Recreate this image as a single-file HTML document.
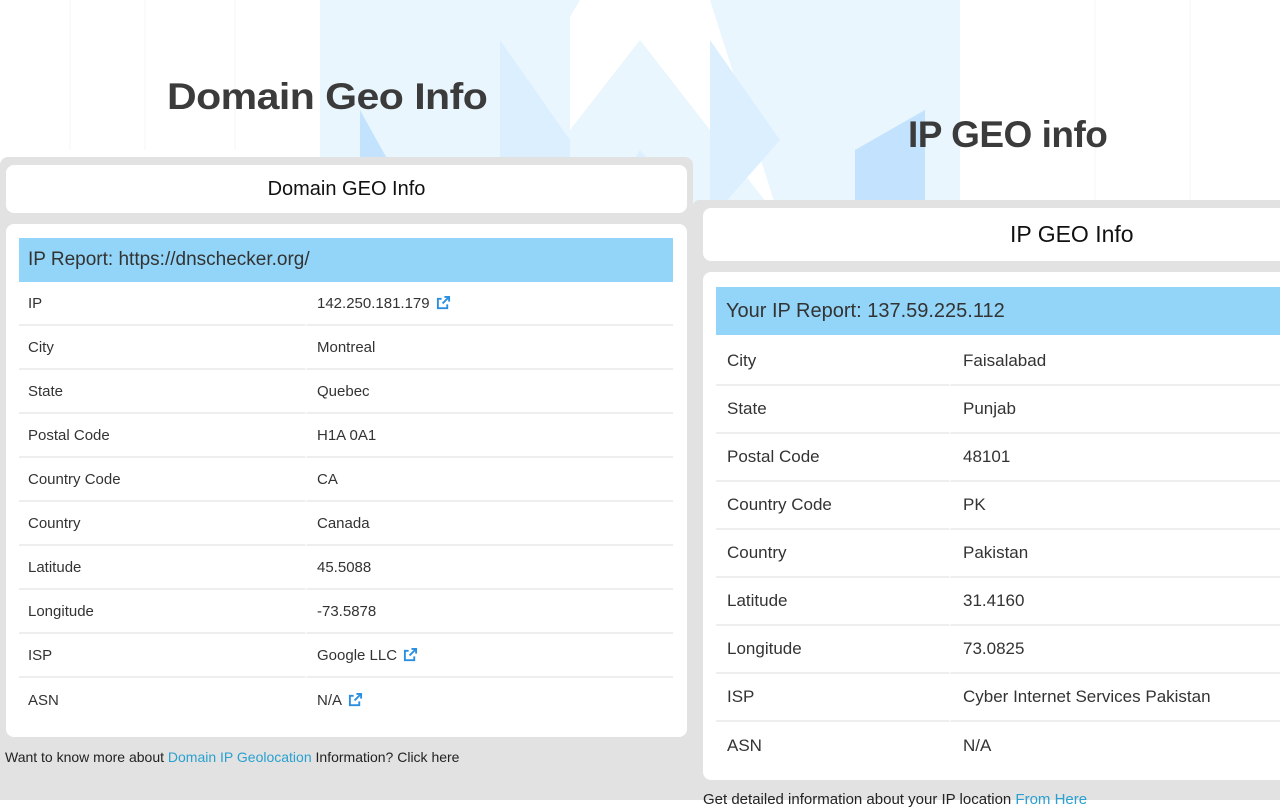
<!DOCTYPE html>
<html><head><style>
*{margin:0;padding:0;box-sizing:border-box}
body{width:1280px;height:800px;overflow:hidden;background:#fff;position:relative;font-family:"Liberation Sans",sans-serif;color:#333}
.bg{position:absolute;left:0;top:0;width:1280px;height:220px}
.t{position:absolute;font-weight:bold;color:#3b3b3b;font-size:37px;letter-spacing:-0.5px;transform-origin:left top}
.panel{position:absolute;background:#e2e2e2;border-radius:8px 8px 0 0}
.card{position:absolute;background:#fff;border-radius:8px}
.hd{display:flex;align-items:center;justify-content:center;color:#111}
table{border-collapse:separate;border-spacing:0;position:absolute}
td{border-bottom:2px solid #eee;vertical-align:middle}
td+td{border-left:2px solid #fff}
.bar{position:absolute;background:#93d5f8;color:#333;display:flex;align-items:center}
.ic{display:inline-block;vertical-align:-2px;margin-left:6px}
a{color:#2aa0d0;text-decoration:none}
</style></head><body>
<svg class="bg" viewBox="0 0 1280 220">
<g fill="#eaf6fe">
<polygon points="320,0 580,0 450,220 320,220"/>
<polygon points="430,0 570,0 570,220 430,220"/>
<polygon points="640,40 780,220 500,220"/>
<polygon points="710,0 960,0 960,220 780,220"/>
</g>
<g fill="#dcefff">
<polygon points="500,40 570,140 570,220 500,220"/>
<polygon points="640,150 700,220 600,220"/>
<polygon points="710,40 780,140 710,220"/>
</g>
<g fill="#c2e2fd">
<polygon points="360,110 410,200 360,220"/>
<polygon points="855,150 925,110 925,200 855,200"/>
</g>
<g stroke="#f3f6f9" stroke-width="1">
<line x1="70" y1="0" x2="70" y2="150"/><line x1="145" y1="0" x2="145" y2="150"/><line x1="235" y1="0" x2="235" y2="150"/>
<line x1="1095" y1="0" x2="1095" y2="200"/><line x1="1190" y1="0" x2="1190" y2="200"/>
</g>
</svg>
<div class="t" style="left:167px;top:76px;transform:scaleX(1.11)">Domain Geo Info</div>
<div class="t" style="left:908px;top:114px">IP GEO info</div>

<div class="panel" style="left:0;top:157px;width:693px;height:643px"></div>
<div class="card hd" style="left:6px;top:165px;width:681px;height:48px;font-size:20px">Domain GEO Info</div>
<div class="card" style="left:6px;top:224px;width:681px;height:513px"></div>
<div class="bar" style="left:19px;top:238px;width:654px;height:44px;font-size:19px;padding-left:9px">IP Report: https://dnschecker.org/</div>
<table style="left:19px;top:282px;width:654px;font-size:15px">
<colgroup><col style="width:286px"><col></colgroup>
<tr style="height:44px"><td style="padding-left:9px">IP</td><td style="padding-left:10px">142.250.181.179<svg class="ic" width="15" height="15" viewBox="0 0 16 16"><path d="M9 2h5v5M14 2L7 9M12 10v4H2V4h4" fill="none" stroke="#2a8fe0" stroke-width="2"/></svg></td></tr>
<tr style="height:44px"><td style="padding-left:9px">City</td><td style="padding-left:10px">Montreal</td></tr>
<tr style="height:44px"><td style="padding-left:9px">State</td><td style="padding-left:10px">Quebec</td></tr>
<tr style="height:44px"><td style="padding-left:9px">Postal Code</td><td style="padding-left:10px">H1A 0A1</td></tr>
<tr style="height:44px"><td style="padding-left:9px">Country Code</td><td style="padding-left:10px">CA</td></tr>
<tr style="height:44px"><td style="padding-left:9px">Country</td><td style="padding-left:10px">Canada</td></tr>
<tr style="height:44px"><td style="padding-left:9px">Latitude</td><td style="padding-left:10px">45.5088</td></tr>
<tr style="height:44px"><td style="padding-left:9px">Longitude</td><td style="padding-left:10px">-73.5878</td></tr>
<tr style="height:44px"><td style="padding-left:9px">ISP</td><td style="padding-left:10px">Google LLC<svg class="ic" width="15" height="15" viewBox="0 0 16 16"><path d="M9 2h5v5M14 2L7 9M12 10v4H2V4h4" fill="none" stroke="#2a8fe0" stroke-width="2"/></svg></td></tr>
<tr style="height:44px"><td style="padding-left:9px;border:none">ASN</td><td style="padding-left:10px;border-bottom:none">N/A<svg class="ic" width="15" height="15" viewBox="0 0 16 16"><path d="M9 2h5v5M14 2L7 9M12 10v4H2V4h4" fill="none" stroke="#2a8fe0" stroke-width="2"/></svg></td></tr>
</table>
<div style="position:absolute;left:5px;top:749px;font-size:14px;color:#222">Want to know more about <a>Domain IP Geolocation</a> Information? Click here</div>

<div class="panel" style="left:693px;top:200px;width:587px;height:600px;border-radius:6px 0 0 0"></div>
<div class="card hd" style="left:703px;top:208px;width:590px;height:53px;font-size:23px;padding-left:146px;justify-content:flex-start;padding-left:307px;border-radius:8px 0 0 8px">IP GEO Info</div>
<div class="card" style="left:703px;top:272px;width:590px;height:508px;border-radius:8px 0 0 8px"></div>
<div class="bar" style="left:716px;top:287px;width:564px;height:48px;font-size:20px;padding-left:10px">Your IP Report: 137.59.225.112</div>
<table style="left:716px;top:338px;width:564px;font-size:17px">
<colgroup><col style="width:233px"><col></colgroup>
<tr style="height:48px"><td style="padding-left:11px">City</td><td style="padding-left:12px">Faisalabad</td></tr>
<tr style="height:48px"><td style="padding-left:11px">State</td><td style="padding-left:12px">Punjab</td></tr>
<tr style="height:48px"><td style="padding-left:11px">Postal Code</td><td style="padding-left:12px">48101</td></tr>
<tr style="height:48px"><td style="padding-left:11px">Country Code</td><td style="padding-left:12px">PK</td></tr>
<tr style="height:48px"><td style="padding-left:11px">Country</td><td style="padding-left:12px">Pakistan</td></tr>
<tr style="height:48px"><td style="padding-left:11px">Latitude</td><td style="padding-left:12px">31.4160</td></tr>
<tr style="height:48px"><td style="padding-left:11px">Longitude</td><td style="padding-left:12px">73.0825</td></tr>
<tr style="height:48px"><td style="padding-left:11px">ISP</td><td style="padding-left:12px">Cyber Internet Services Pakistan</td></tr>
<tr style="height:48px"><td style="padding-left:11px;border:none">ASN</td><td style="padding-left:12px;border-bottom:none">N/A</td></tr>
</table>
<div style="position:absolute;left:703px;top:791px;font-size:15px;color:#222">Get detailed information about your IP location <a>From Here</a></div>
</body></html>
